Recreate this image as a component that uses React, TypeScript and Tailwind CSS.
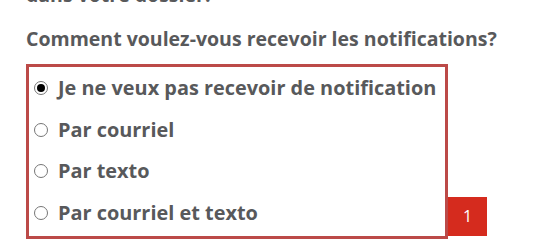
import { useState } from 'react'

const options = [
  'Je ne veux pas recevoir de notification',
  'Par courriel',
  'Par texto',
  'Par courriel et texto',
]

export default function App() {
  const [choice, setChoice] = useState(0)

  return (
    <div
      className="w-[552px] h-[251px] overflow-hidden bg-white text-[#58595b] font-bold"
      style={{ fontFamily: '"Open Sans", "Liberation Sans", sans-serif' }}
    >
      <div className="-mt-[17px] pl-[26px] text-[19.5px] leading-[24px]">
        <p>dans votre dossier.</p>
        <p className="mt-[20px]">Comment voulez-vous recevoir les notifications?</p>
      </div>

      <div className="flex items-end mt-[13px] ml-[26px]">
        <fieldset className="w-[422px] border-[3px] border-[#bc4a48] pb-[2px]">
          {options.map((label, i) => (
            <label
              key={label}
              className="flex items-center h-[41.7px] pl-[5px] text-[19.9px] cursor-pointer"
            >
              <input
                type="radio"
                name="notif"
                checked={choice === i}
                onChange={() => setChoice(i)}
                className="sr-only"
              />
              <span className="flex items-center justify-center w-[14px] h-[14px] rounded-full border border-[#767676] bg-white">
                {choice === i && <span className="w-[8px] h-[8px] rounded-full bg-black" />}
              </span>
              <span className="ml-[10px]">{label}</span>
            </label>
          ))}
        </fieldset>
        <div className="w-[39px] h-[39px] mb-[3px] bg-[#d52b1e] text-white text-[16px] font-normal flex items-center justify-center">
          1
        </div>
      </div>
    </div>
  )
}
